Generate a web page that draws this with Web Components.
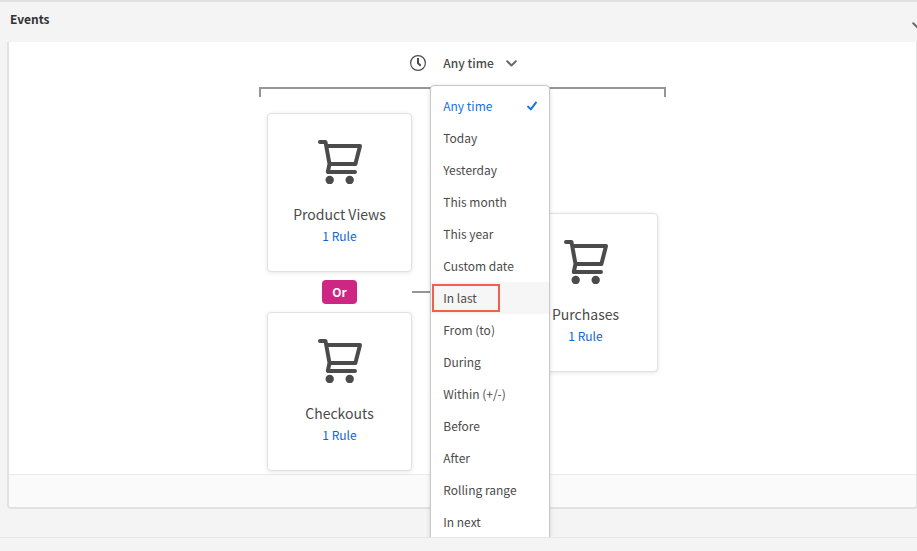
<!DOCTYPE html>
<html lang="en">
<head>
<meta charset="utf-8">
<title>Events</title>
<style>
  html, body { height: 100%; }
  body {
    margin: 0;
    overflow: hidden;
    background: #f4f4f4;
    color: #4b4b4b;
    font-family: "Noto Sans CJK SC", "Noto Sans", sans-serif;
    font-size: 12px;
    line-height: 20px;
  }
</style>
</head>
<body>
<events-page>
  <events-header slot="header">Events</events-header>
  <events-panel>
    <time-picker value="Any time" active="In last"></time-picker>
    <event-sequence>
      <event-group slot="first">
        <event-card name="Product Views" rules="1 Rule"></event-card>
        <logic-badge>Or</logic-badge>
        <event-card name="Checkouts" rules="1 Rule"></event-card>
      </event-group>
      <event-card slot="second" name="Purchases" rules="1 Rule"></event-card>
    </event-sequence>
  </events-panel>
</events-page>

<script>
const define = (name, html, setup) => {
  const template = document.createElement('template');
  template.innerHTML = html;
  customElements.define(name, class extends HTMLElement {
    constructor() {
      super();
      this.attachShadow({ mode: 'open' }).append(template.content.cloneNode(true));
    }
    connectedCallback() {
      if (setup && !this.ready) { this.ready = true; setup(this, this.shadowRoot); }
    }
  });
};

define('icon-chevron', `
  <style>:host { display: block; width: 11px; height: 7px; } svg { display: block; }</style>
  <svg width="11" height="7" viewBox="0 0 11 7" fill="none" stroke="#6a6a6a" stroke-width="2" stroke-linecap="round" stroke-linejoin="round" aria-hidden="true">
    <path d="M1.2 1.2 5.5 5.5 9.8 1.2"/>
  </svg>`);

define('icon-clock', `
  <style>:host { display: block; width: 16px; height: 16px; } svg { display: block; }</style>
  <svg width="16" height="16" viewBox="0 0 16 16" fill="none" stroke="#4b4b4b" aria-hidden="true">
    <circle cx="8" cy="8" r="7.4" stroke-width="1.2"/>
    <path d="M8 3v5.1l2.7 2.7" stroke-width="2"/>
  </svg>`);

define('icon-check', `
  <style>:host { display: block; width: 10px; height: 10px; } svg { display: block; }</style>
  <svg width="10" height="10" viewBox="0 0 10 10" fill="none" stroke="#1473e6" stroke-width="2" stroke-linecap="round" stroke-linejoin="round" aria-hidden="true">
    <path d="M1.1 5.6 3.8 8.4 8.9 1.6"/>
  </svg>`);

define('icon-cart', `
  <style>:host { display: block; width: 44px; height: 44px; } svg { display: block; }</style>
  <svg width="44" height="44" viewBox="0 0 44 44" fill="none" stroke="#4b4b4b" stroke-width="4" stroke-linecap="round" stroke-linejoin="round" aria-hidden="true">
    <path d="M2 2h5.5L11.5 24 9.8 32H37M8.3 6H42L37.4 24H11.5"/>
    <circle cx="11.7" cy="40" r="4.2" fill="#4b4b4b" stroke="none"/>
    <circle cx="31.7" cy="40" r="4.2" fill="#4b4b4b" stroke="none"/>
  </svg>`);

define('events-page', `
  <style>
    :host { display: flex; flex-direction: column; height: 100vh; box-sizing: border-box; border-top: 2px solid #e1e1e1; }
    main { flex: 1; min-height: 0; overflow: hidden; padding-left: 7px; margin-right: -1px; }
    footer { flex: none; height: 13px; border-top: 1px solid #e6e6e6; }
  </style>
  <slot name="header"></slot>
  <main><slot></slot></main>
  <footer></footer>`);

define('events-header', `
  <style>
    :host { display: flex; flex: none; align-items: center; justify-content: space-between; height: 40px; box-sizing: border-box; padding: 0 0 6px 10px; }
    h1 { margin: 0; font-size: 12px; line-height: 20px; font-weight: 700; color: #323232; }
    button { flex: none; margin: 12px -6px 0 0; padding: 0; border: 0; background: none; }
  </style>
  <h1><slot></slot></h1>
  <button type="button" aria-label="Collapse events"><icon-chevron></icon-chevron></button>`);

define('events-panel', `
  <style>
    :host { display: block; border: 2px solid #e1e1e1; border-top: 0; border-radius: 0 0 4px 4px; background: #fff; }
    .canvas { display: flex; flex-direction: column; align-items: center; padding-bottom: 3px; }
    .tray { height: 32px; border-top: 1px solid #eaeaea; background: #fafafa; border-radius: 0 0 2px 2px; }
  </style>
  <div class="canvas"><slot></slot></div>
  <div class="tray"></div>`);

define('time-picker', `
  <style>
    :host { display: flex; align-items: center; gap: 4px; height: 42px; padding-left: 2px; }
    .field { position: relative; }
    .trigger { display: flex; align-items: center; gap: 12px; padding: 0 0 0 13px; border: 0; background: none; font: inherit; font-weight: 500; color: #4b4b4b; }
    .menu {
      position: absolute; z-index: 2; top: 32px; left: 0; width: 120px; box-sizing: border-box;
      padding: 4px 0; border: 1px solid #c8c8c8; border-radius: 4px; background: #fff;
      box-shadow: 0 1px 4px rgba(0, 0, 0, .15);
    }
    .item {
      display: flex; align-items: center; justify-content: space-between; width: 100%; height: 32px; box-sizing: border-box;
      padding: 0 12px; border: 0; background: none; font: inherit; color: #4b4b4b; text-align: left;
    }
    .item[aria-checked="true"] { color: #1473e6; }
    .item.active { padding-left: 1px; background: #f6f6f6; }
    .active span { width: 68px; box-sizing: border-box; padding: 2px 9px; border: 2px solid #f0604d; }
  </style>
  <icon-clock></icon-clock>
  <div class="field">
    <button class="trigger" type="button" aria-haspopup="menu" aria-expanded="true"><span></span><icon-chevron></icon-chevron></button>
    <div class="menu" role="menu"></div>
  </div>`, (host, root) => {
  const value = host.getAttribute('value');
  const active = host.getAttribute('active');
  root.querySelector('.trigger span').textContent = value;
  const menu = root.querySelector('.menu');
  const options = ['Any time', 'Today', 'Yesterday', 'This month', 'This year', 'Custom date', 'In last',
    'From (to)', 'During', 'Within (+/-)', 'Before', 'After', 'Rolling range', 'In next'];
  for (const text of options) {
    const item = document.createElement('button');
    item.type = 'button';
    item.className = text === active ? 'item active' : 'item';
    item.setAttribute('role', 'menuitemradio');
    item.setAttribute('aria-checked', String(text === value));
    const label = document.createElement('span');
    label.textContent = text;
    item.append(label);
    if (text === value) item.append(document.createElement('icon-check'));
    menu.append(item);
  }
});

define('event-sequence', `
  <style>
    :host { display: block; margin-top: 3px; }
    .bracket { height: 8px; border: 2px solid #969696; border-bottom: 0; }
    .row { display: flex; align-items: center; padding: 16px 8px 0; }
    .link { width: 101px; height: 2px; background: #969696; }
  </style>
  <div class="bracket"></div>
  <div class="row">
    <slot name="first"></slot>
    <div class="link"></div>
    <slot name="second"></slot>
  </div>`);

define('event-group', `
  <style>:host { display: flex; flex-direction: column; align-items: center; gap: 8px; }</style>
  <slot></slot>`);

define('logic-badge', `
  <style>
    :host { display: block; }
    button { display: block; width: 35px; height: 24px; padding: 0; border: 0; border-radius: 4px; background: #ce2783; color: #fff; font: inherit; font-weight: 700; }
  </style>
  <button type="button"><slot></slot></button>`);

define('event-card', `
  <style>
    :host {
      display: flex; flex-direction: column; align-items: center; width: 145px; height: 159px; box-sizing: border-box;
      padding-top: 26px; border: 1px solid #e1e1e1; border-radius: 4px; background: #fff; box-shadow: 0 1px 4px rgba(0, 0, 0, .1);
    }
    .name { margin: 20px 0 2px; font-size: 14px; line-height: 20px; }
    a { color: #0d66d0; text-decoration: none; }
  </style>
  <icon-cart></icon-cart>
  <div class="name"></div>
  <a href="#rules"></a>`, (host, root) => {
  root.querySelector('.name').textContent = host.getAttribute('name');
  root.querySelector('a').textContent = host.getAttribute('rules');
});
</script>
</body>
</html>
